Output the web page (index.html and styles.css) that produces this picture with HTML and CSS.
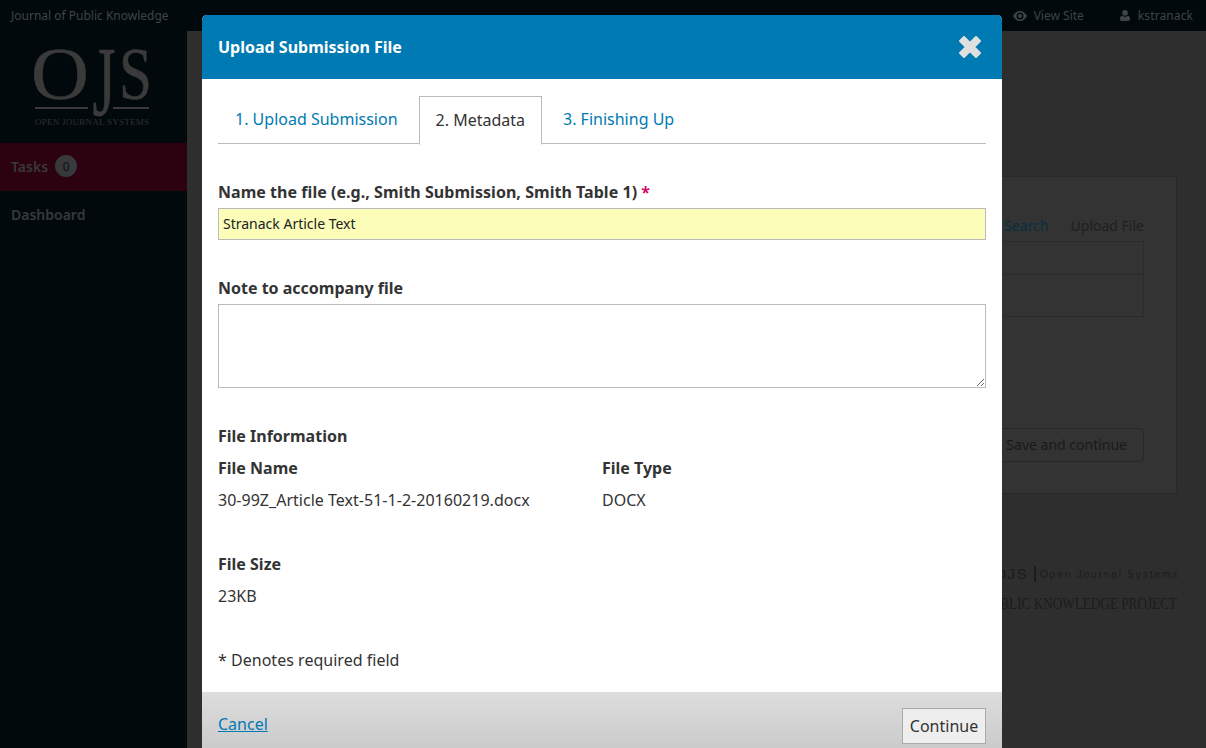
FILE: index.html
```html
<!DOCTYPE html>
<html>
    <head>
        <meta charset="UTF-8">
        <title>Upload Submission File</title>
        <link rel="stylesheet" href="styles.css">
    </head>
    <body>
        <div class="page">
            <div class="topbar">
                <span class="journal">Journal of Public Knowledge</span>
                <div class="usernav">
                    <span class="navitem">
                        <svg class="navicon" width="14" height="10" viewBox="0 0 14 10"><path fill="#3f4447" fill-rule="evenodd" d="M7 0C4 0 1.600 2 0 5c1.600 3 4 5 7 5s5.400-2 7-5c-1.600-3-4-5-7-5zm0 1.500a3.500 3.500 0 1 1 0 7 3.500 3.500 0 0 1 0-7zM7 3a2 2 0 1 0 0 4 2 2 0 0 0 0-4z"/></svg>
                        View Site
                    </span>
                    <span class="navitem user">
                        <svg class="navicon" width="10" height="11" viewBox="0 0 10 11"><path fill="#3f4447" d="M5 0a2.800 2.800 0 0 1 2.800 2.900A2.800 2.800 0 0 1 5 5.800a2.800 2.800 0 0 1-2.800-2.900A2.800 2.800 0 0 1 5 0zM2 5.800c.8.600 1.900 1 3 1s2.200-.4 3-1c1.300.2 2 1.300 2 3.200 0 1.200-.7 2-1.800 2H1.800C.7 11 0 10.200 0 9c0-1.900.7-3 2-3.200z"/></svg>
                        kstranack
                    </span>
                </div>
            </div>
            <div class="below">
                <div class="sidebar">
                    <svg class="logo-svg" width="187" height="112" viewBox="0 31 187 112">
                        <text class="logo-big" x="31" y="99" font-size="74" textLength="58" lengthAdjust="spacingAndGlyphs">O</text>
                        <text class="logo-big" transform="translate(92.500 115) scale(.8 1.330)" font-size="74">J</text>
                        <text class="logo-big" transform="translate(119 99) scale(.8 1)" font-size="74">S</text>
                        <rect x="35" y="107" width="53" height="2"/>
                        <rect x="113" y="107" width="36" height="2"/>
                        <text class="logo-name" x="35" y="125" font-size="9" textLength="114">OPEN JOURNAL SYSTEMS</text>
                    </svg>
                    <div class="sideitem current">Tasks <span class="count">0</span></div>
                    <div class="sideitem">Dashboard</div>
                </div>
                <div class="main">
                    <div class="card">
                        <div class="cardlinks">
                            <span class="searchlink">Search</span>
                            <span>Upload File</span>
                        </div>
                        <div class="cardtable">
                            <div class="cardrow"></div>
                            <div class="cardrow"></div>
                        </div>
                        <div class="savebtn">Save and continue</div>
                    </div>
                    <div class="brand">
                        <div class="brand-ojs">OJS <span class="brand-open">Open Journal Systems</span></div>
                        <div class="brand-pkp">PUBLIC KNOWLEDGE PROJECT</div>
                    </div>
                </div>
            </div>
            <div class="modal">
                <div class="modal-head">
                    <h2>Upload Submission File</h2>
                    <svg class="close" width="24" height="24" viewBox="0 0 24 24"><path fill="#e0e0e0" stroke="#e0e0e0" stroke-width="2" stroke-linejoin="round" d="M6 2l6 6 6-6 4 4-6 6 6 6-4 4-6-6-6 6-4-4 6-6-6-6z"/></svg>
                </div>
                <div class="modal-body">
                    <ul class="tabs">
                        <li>1. Upload Submission</li>
                        <li class="active">2. Metadata</li>
                        <li>3. Finishing Up</li>
                    </ul>
                    <label class="label first">Name the file (e.g., Smith Submission, Smith Table 1) <span class="req">*</span></label>
                    <input class="textinput" type="text" value="Stranack Article Text">
                    <label class="label note">Note to accompany file</label>
                    <textarea class="notearea"></textarea>
                    <div class="label info">File Information</div>
                    <div class="filegrid">
                        <div>
                            <div class="label">File Name</div>
                            <div class="value">30-99Z_Article Text-51-1-2-20160219.docx</div>
                        </div>
                        <div>
                            <div class="label">File Type</div>
                            <div class="value">DOCX</div>
                        </div>
                    </div>
                    <div class="label size">File Size</div>
                    <div class="value">23KB</div>
                    <div class="value required">* Denotes required field</div>
                </div>
                <div class="modal-foot">
                    <a class="cancel" href="#">Cancel</a>
                    <button class="continue">Continue</button>
                </div>
            </div>
        </div>
    </body>
</html>
```

FILE: styles.css
```css
html, body{
    margin: 0;
    padding: 0;
    height: 100%;
    overflow: hidden;
}
body{
    font-family: "Noto Sans", sans-serif;
    font-size: 16px;
    color: #222;
}
.page{
    position: relative;
    width: 1206px;
    height: 748px;
    overflow: hidden;
    background: #2e2e2e;
}
.topbar{
    height: 31px;
    background: #01090d;
    display: flex;
    justify-content: space-between;
    align-items: center;
    color: #3f4447;
    font-size: 12px;
}
.journal{
    padding-left: 11px;
}
.usernav{
    display: flex;
    gap: 36px;
    padding-right: 13px;
}
.navitem{
    display: flex;
    align-items: center;
    gap: 7px;
}
.navitem.user{
    gap: 8px;
    letter-spacing: .1px;
}
.below{
    display: flex;
    height: 717px;
}
.sidebar{
    width: 187px;
    background: #01090d;
    color: #37393b;
    font-size: 14px;
    font-weight: 600;
}
.logo-svg{
    display: block;
    overflow: visible;
    fill: #3a3a3a;
    font-family: "Liberation Serif", serif;
    font-weight: 400;
}
.logo-big{
    stroke: #3a3a3a;
    stroke-width: .5;
}
.logo-name{
    fill: #303030;
}
.sideitem{
    height: 48px;
    padding: 0 0 2px 11px;
    box-sizing: border-box;
    display: flex;
    align-items: center;
    gap: 7px;
}
.sideitem.current{
    background: #2c0110;
}
.count{
    width: 22px;
    height: 22px;
    border-radius: 50%;
    background: #37393b;
    color: #111;
    font-size: 12px;
    font-weight: 400;
    display: flex;
    align-items: center;
    justify-content: center;
}
.main{
    flex: 1;
    display: flex;
    flex-direction: column;
    align-items: flex-end;
}
.card{
    width: 400px;
    height: 318px;
    box-sizing: border-box;
    margin: 145px 29px 0 0;
    padding: 39px 32px 0 0;
    background: #333;
    border: 1px solid #292929;
    display: flex;
    flex-direction: column;
    align-items: flex-end;
    color: #1f1f1f;
    font-size: 14px;
}
.cardlinks{
    display: flex;
    gap: 22px;
    height: 24px;
}
.searchlink{
    color: #06303f;
}
.cardtable{
    width: 250px;
    height: 76px;
    box-sizing: border-box;
    border: 1px solid #2b2b2b;
    margin-top: 1px;
}
.cardrow{
    height: 32px;
}
.cardrow + .cardrow{
    border-top: 1px solid #2b2b2b;
    height: 40px;
}
.savebtn{
    margin-top: 111px;
    width: 250px;
    height: 34px;
    box-sizing: border-box;
    border: 1px solid #282828;
    border-radius: 4px;
    text-align: right;
    padding: 6px 16px 0 0;
    line-height: 20px;
    color: #1a1a1a;
}
.brand{
    margin: 71px 27px 0 0;
    width: 400px;
    text-align: right;
    color: #1c1c1c;
}
.brand-ojs{
    font-family: "Liberation Sans", sans-serif;
    font-size: 15px;
    letter-spacing: 1.500px;
    line-height: 18px;
}
.brand-open{
    font-size: 10.500px;
    letter-spacing: 1.650px;
    border-left: 2px solid #1c1c1c;
    padding: 2px 0 2px 4px;
    vertical-align: 1px;
}
.brand-pkp{
    font-family: "Liberation Serif", serif;
    font-size: 16.500px;
    line-height: 18px;
    margin-top: 12px;
    padding-right: 2px;
    transform: scaleX(.8);
    transform-origin: 398px 50%;
}
.modal{
    position: absolute;
    left: 202px;
    top: 15px;
    width: 800px;
    height: 733px;
    background: #fff;
    border-radius: 5px 5px 0 0;
    display: flex;
    flex-direction: column;
    overflow: hidden;
}
.modal-head{
    height: 64px;
    flex: none;
    background: #007ab2;
    display: flex;
    align-items: center;
    justify-content: space-between;
    padding: 0 20px 0 16px;
}
.modal-head h2{
    margin: 0;
    color: #fff;
    font-size: 16px;
    font-weight: 700;
}
.modal-body{
    flex: 1;
    padding: 17px 16px 0;
}
.tabs{
    list-style: none;
    margin: 0;
    padding: 0;
    display: flex;
    gap: 4px;
    height: 48px;
    box-sizing: border-box;
    border-bottom: 1px solid #bbb;
    color: #007ab2;
}
.tabs li{
    padding: 0 17px;
    height: 47px;
    line-height: 46px;
}
.tabs li.active{
    color: #333;
    background: #fff;
    border: 1px solid #bbb;
    border-bottom: 1px solid #fff;
    padding: 0 16px;
}
.label{
    display: block;
    font-weight: 700;
    line-height: 24px;
    color: #333;
}
.label.first{
    margin-top: 36px;
    letter-spacing: .04px;
}
.req{
    color: #d00a6c;
}
.textinput{
    display: block;
    width: 100%;
    height: 32px;
    box-sizing: border-box;
    margin-top: 4px;
    padding: 0 4px 2px;
    border: 1px solid #bbb;
    background: #fbfdb9;
    font-family: "Noto Sans", sans-serif;
    font-size: 14px;
    color: #222;
}
.label.note{
    margin-top: 36px;
}
.notearea{
    display: block;
    width: 100%;
    height: 84px;
    box-sizing: border-box;
    margin-top: 4px;
    border: 1px solid #bbb;
}
.label.info{
    margin-top: 36px;
}
.filegrid{
    display: grid;
    grid-template-columns: 384px 1fr;
    margin-top: 8px;
}
.value{
    line-height: 24px;
    margin-top: 8px;
    color: #333;
    letter-spacing: .02px;
}
.label.size{
    margin-top: 40px;
}
.value.required{
    margin-top: 40px;
}
.modal-foot{
    height: 56px;
    flex: none;
    background: linear-gradient(#dddddd, #cbcbcb);
    display: flex;
    justify-content: space-between;
    align-items: flex-start;
    padding: 0 16px;
}
.cancel{
    margin-top: 20px;
    color: #007ab2;
    line-height: 24px;
}
.continue{
    margin-top: 16px;
    width: 84px;
    height: 36px;
    border: 1px solid #aaa;
    background: #eee;
    font-family: "Noto Sans", sans-serif;
    font-size: 16px;
    color: #333;
    padding: 0;
}
```
